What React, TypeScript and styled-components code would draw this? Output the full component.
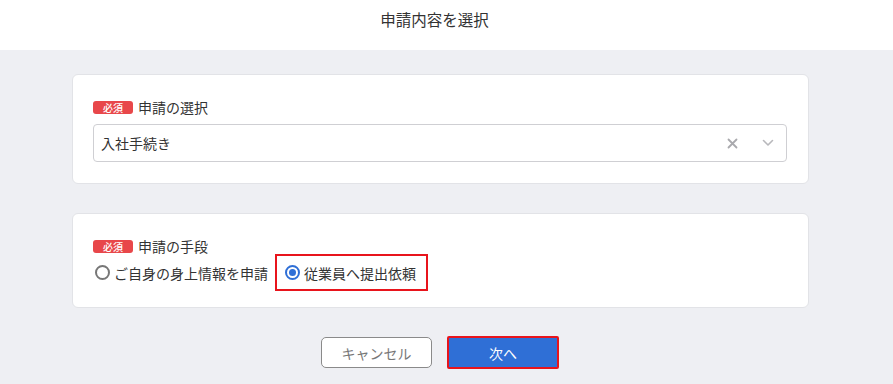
import React from "react";
import styled, { createGlobalStyle } from "styled-components";

const Global = createGlobalStyle`
  html, body { margin: 0; padding: 0; background: #eeeff3; }
  body { font-family: "Noto Sans CJK JP", "Noto Sans", sans-serif; color: #333; }
`;

const Header = styled.header`
  height: 50px;
  background: #fff;
  display: flex;
  justify-content: center;
  padding: 8px 24px 0 0;
  box-sizing: border-box;
`;

const Title = styled.h1`
  margin: 0;
  font-size: 15.5px;
  font-weight: 400;
  line-height: 22px;
  color: #333;
`;

const Main = styled.main`
  width: 737px;
  margin: 24px 0 0 72px;
  display: flex;
  flex-direction: column;
  gap: 29px;
`;

const Card = styled.section<{ $h: number }>`
  background: #fff;
  border: 1px solid #e2e3e7;
  border-radius: 6px;
  height: ${(p) => p.$h}px;
  padding: 22px 21px 0 20px;
  box-sizing: border-box;
  display: flex;
  flex-direction: column;
`;

const LabelRow = styled.div`
  display: flex;
  align-items: center;
  gap: 5px;
  height: 20px;
  font-size: 14px;
  color: #333;
`;

const Badge = styled.span`
  display: inline-flex;
  align-items: center;
  justify-content: center;
  width: 40px;
  height: 13px;
  border-radius: 3px;
  background: #e8474a;
  color: #fff;
  font-size: 10px;
  font-weight: 500;
  line-height: 13px;
`;

const SelectBox = styled.div`
  margin-top: 7px;
  height: 38px;
  border: 1px solid #cfcfd3;
  border-radius: 4px;
  display: flex;
  align-items: center;
  padding: 0 10px 0 7px;
  box-sizing: border-box;
  font-size: 14px;
  color: #333;
`;

const SelectValue = styled.span`
  flex: 1;
`;

const IconBtn = styled.span`
  display: inline-flex;
  width: 16px;
  justify-content: center;
  margin-left: 20px;
`;

const RadioRow = styled.div`
  margin-top: -2px;
  display: flex;
  align-items: center;
  gap: 7px;
`;

const RadioOption = styled.label<{ $highlight?: boolean }>`
  display: inline-flex;
  align-items: center;
  gap: 4px;
  font-size: 14px;
  color: #333;
  height: 37px;
  box-sizing: border-box;
  padding: ${(p) => (p.$highlight ? "0 10px 0 8px" : "0 0 0 2px")};
  border: ${(p) => (p.$highlight ? "2px solid #e8141c" : "none")};
`;

const RadioCircle = styled.span<{ $checked?: boolean }>`
  width: 15px;
  height: 15px;
  border-radius: 50%;
  box-sizing: border-box;
  border: 2px solid ${(p) => (p.$checked ? "#2f6fd6" : "#777")};
  display: inline-flex;
  align-items: center;
  justify-content: center;
  &::after {
    content: "";
    width: 7px;
    height: 7px;
    border-radius: 50%;
    background: ${(p) => (p.$checked ? "#2f6fd6" : "transparent")};
  }
`;

const Actions = styled.div`
  display: flex;
  justify-content: center;
  gap: 15px;
  margin-left: -1px;
  margin-top: -1px;
  align-items: center;
`;

const Button = styled.button<{ $primary?: boolean }>`
  width: ${(p) => (p.$primary ? "112px" : "111px")};
  height: ${(p) => (p.$primary ? "33px" : "31px")};
  border-radius: ${(p) => (p.$primary ? "2px" : "5px")};
  border: ${(p) => (p.$primary ? "2px solid #e8141c" : "1px solid #8a8a8a")};
  background: ${(p) => (p.$primary ? "#2f6fd6" : "#fff")};
  color: ${(p) => (p.$primary ? "#fff" : "#777")};
  font-family: inherit;
  font-size: 14px;
  padding: 0;
  cursor: pointer;
`;

export default function App() {
  return (
    <>
      <Global />
      <Header>
        <Title>申請内容を選択</Title>
      </Header>
      <Main>
        <Card $h={110}>
          <LabelRow>
            <Badge>必須</Badge>
            申請の選択
          </LabelRow>
          <SelectBox>
            <SelectValue>入社手続き</SelectValue>
            <IconBtn>
              <svg width="11" height="11" viewBox="0 0 11 11">
                <path d="M1.5 1.5 L9.5 9.5 M9.5 1.5 L1.5 9.5" stroke="#a9a9ad" strokeWidth="1.8" strokeLinecap="round" />
              </svg>
            </IconBtn>
            <IconBtn>
              <svg width="12" height="8" viewBox="0 0 12 8">
                <path d="M1.5 1.5 L6 6 L10.5 1.5" stroke="#b8b8bc" strokeWidth="1.6" fill="none" strokeLinecap="round" strokeLinejoin="round" />
              </svg>
            </IconBtn>
          </SelectBox>
        </Card>
        <Card $h={95}>
          <LabelRow>
            <Badge>必須</Badge>
            申請の手段
          </LabelRow>
          <RadioRow>
            <RadioOption>
              <RadioCircle />
              ご自身の身上情報を申請
            </RadioOption>
            <RadioOption $highlight>
              <RadioCircle $checked />
              従業員へ提出依頼
            </RadioOption>
          </RadioRow>
        </Card>
        <Actions>
          <Button>キャンセル</Button>
          <Button $primary>次へ</Button>
        </Actions>
      </Main>
    </>
  );
}
